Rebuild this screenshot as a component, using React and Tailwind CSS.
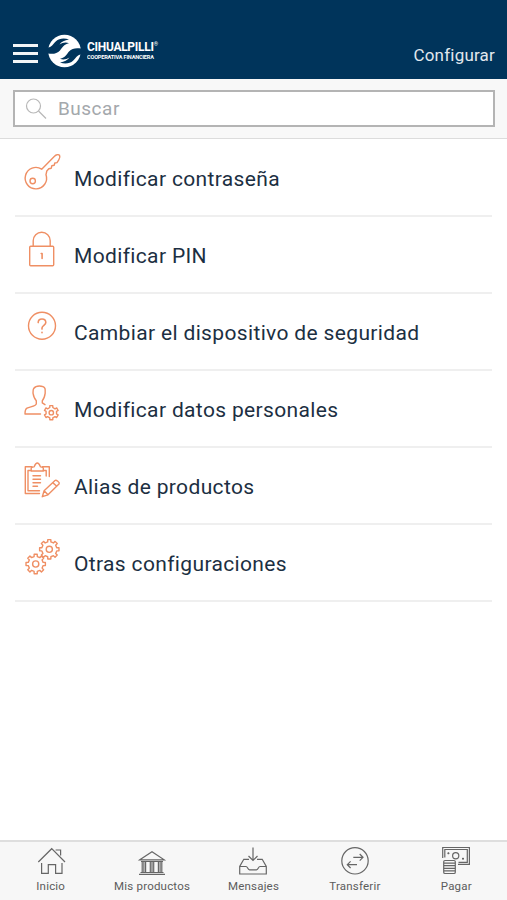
import { useState } from 'react';

const round = (n) => Math.round(n * 100) / 100;

function gearPath(cx, cy, outer, inner, teeth) {
  const step = (Math.PI * 2) / teeth;
  const points = [];
  for (let i = 0; i < teeth; i++) {
    const a = i * step - Math.PI / 2;
    [
      [-0.27, inner],
      [-0.2, outer],
      [0.2, outer],
      [0.27, inner],
    ].forEach(([offset, r]) => {
      points.push(`${round(cx + r * Math.cos(a + offset * step))} ${round(cy + r * Math.sin(a + offset * step))}`);
    });
  }
  return `M${points.join('L')}Z`;
}

function MenuIcon({ children }) {
  return (
    <svg
      className="w-9 h-9 shrink-0 overflow-visible text-[#ef8f64]"
      viewBox="0 0 36 36"
      fill="none"
      stroke="currentColor"
      strokeWidth={1.4}
      strokeLinecap="round"
      strokeLinejoin="round"
    >
      {children}
    </svg>
  );
}

function TabIcon({ children }) {
  return (
    <svg className="w-[30px] h-[30px] text-[#666]" viewBox="0 0 30 30" fill="none" stroke="currentColor" strokeWidth={1.2}>
      {children}
    </svg>
  );
}

const MENU = [
  {
    label: 'Modificar contraseña',
    icon: (
      <>
        <path d="M17.7 15.2 30.5 2.2C32 .8 34.5.2 35.5 1.2 36.2 2.5 36 4 34.8 5.8L33 8.6 30.8 9 30.2 11.3 27.8 11.7 27.3 14.2 24.8 14.8 22.8 17 22 20.7A10.7 10.7 0 1 1 17.7 15.2Z" />
        <circle cx="8.7" cy="27" r="2.7" />
      </>
    ),
  },
  {
    label: 'Modificar PIN',
    icon: (
      <>
        <rect x="5.7" y="15.2" width="24" height="19.6" rx="1" />
        <path d="M9.2 15V9.8a8.5 8.5 0 0 1 17 0V15" />
        <path d="M17.2 22.5h.9v5" strokeWidth={1.6} />
      </>
    ),
  },
  {
    label: 'Cambiar el dispositivo de seguridad',
    icon: (
      <>
        <circle cx="18" cy="17.7" r="13.5" />
        <path d="M14.2 14.6c0-2.2 1.6-3.6 3.8-3.6s3.8 1.4 3.8 3.5c0 2.5-3.8 3-3.8 5.4v1.2M18 24.3v.4" strokeWidth={1.6} />
      </>
    ),
  },
  {
    label: 'Modificar datos personales',
    icon: (
      <>
        <path d="M16.5 29H1c0-2.8.2-5 2-5.9 3-1.5 9.3-1.8 9.3-4.4v-3C10.3 13.8 9.5 11 9 8.2c.2-1.500-.2-3.500.7-4.700C11 1.700 13 1 15.300 1s4.700.6 5.600 2.300c.6 1.700.1 3.300.3 4.900-.4 2.800-1 5.500-2.900 7.500v2.200l2.700 1.800" />
        <path d={gearPath(27.3, 27.7, 7.2, 5.4, 6)} />
        <circle cx="27.3" cy="27.7" r="2.2" />
      </>
    ),
  },
  {
    label: 'Alias de productos',
    icon: (
      <>
        <path d="M8 4.8H1.3v26.7h14.2M7.3 8.5H4v20.2h11.5M18.3 4.8h7v9.7M19.3 8.5h2.9V14" />
        <path d="M7.2 9V6c0-1 2.3-.7 3-1.3.8-2 1.300-3.700 3.100-3.700s2.300 1.700 3.100 3.700c.7.6 2.900.3 2.900 1.300v3Z" />
        <path d="M9 13.7h7.5M9 17.3h7.5M9 20.7h7.5M9 24.2h4.5" />
        <path d="m18.3 34.7 1.8-6 10.9-10.2c1.2-1 4.9 2 4.2 3.300L24 32.800ZM20.100 28.700l3.900 4.100M28.700 20.600l4.100 3.600" />
      </>
    ),
  },
  {
    label: 'Otras configuraciones',
    icon: (
      <>
        <path d={gearPath(25.3, 10.3, 9.8, 7.6, 8)} />
        <circle cx="25.3" cy="10.3" r="3.1" />
        <path d={gearPath(11.7, 25, 9.8, 7.6, 8)} />
        <circle cx="11.7" cy="25" r="3.1" />
      </>
    ),
  },
];

const TABS = [
  {
    label: 'Inicio',
    icon: <path d="M2.3 16 15.700 2.700 29 16M19.600 4h5v5.500M5.600 17v10.300h6.700v-8.600h7.300v8.600H26V17" />,
  },
  {
    label: 'Mis productos',
    icon: (
      <>
        <path d="M2.8 13.8 15 5.7l12.2 8.1ZM4 15.5h22M3.5 26.5h23M2 28.3h26" />
        <path d="M5.2 16v10M6.9 16v10M8.6 16v10M13.3 16v10M15 16v10M16.7 16v10M21.4 16v10M23.1 16v10M24.8 16v10" />
      </>
    ),
  },
  {
    label: 'Mensajes',
    icon: (
      <path d="M15 1.5v13M10.5 10 15 14.5l4.500-4.500M11 13.300H5.800L1.700 20.500v7.500h26.600v-7.500l-4.100-7.200H19M1.700 20.500H8c1.800 0 1.500 3.300 3.500 3.300h7c2 0 1.700-3.300 3.500-3.300h6.300" />
    ),
  },
  {
    label: 'Transferir',
    icon: (
      <>
        <circle cx="15" cy="14.8" r="13.2" />
        <path d="M13.3 11.3H23M19.7 8l3.300 3.300-3.300 3.300M17 18.700H7.300M10.600 15.400l-3.300 3.300 3.300 3.300" />
      </>
    ),
  },
  {
    label: 'Pagar',
    icon: (
      <>
        <path d="M1.7 12V1.5h26.7v16.8H17M3.8 11.5v-8h22.5v12.8H17.5" />
        <circle cx="14.7" cy="9.8" r="3.1" />
        <path d="M7.4 6.3v2M6.4 7.3h2M22 11.7v2M21 12.7h2" />
        <path d="M4 14.5h9q1.3 0 1.3 1.3v10.4q0 1.3-1.3 1.3H4q-1.3 0-1.3-1.3V15.8q0-1.3 1.3-1.3ZM2.7 17.1h11.6M2.7 19.7h11.6M2.7 22.3h11.6M2.7 24.9h11.6" />
      </>
    ),
  },
];

const SWOOSH =
  'M0 14.5C4 14 5 11 8 8.3 11 5.5 16 4.8 21 6.6 16.5 7.3 13.5 8.7 11.5 11.5 14.5 9.5 18 8.8 21 10.3 15.5 11.5 14.5 14.5 12 17.5 9 20.8 5 21.3 0 20.5Z';

function Logo() {
  return (
    <div className="flex items-center gap-[6px] text-white">
      <svg className="w-[33px] h-[36px]" viewBox="0 0 33 36">
        <circle cx="16.5" cy="18" r="16.3" fill="white" />
        <g fill="#00345b">
          <path d={SWOOSH} />
          <path d={SWOOSH} transform="rotate(180 16.5 18)" />
        </g>
      </svg>
      <div className="w-[72px] whitespace-nowrap">
        <div className="flex w-max origin-left scale-x-[0.92] text-[13px] leading-[11px] font-bold tracking-[-0.3px]">
          CIHUALPILLI<span className="text-[6px] leading-[6px]">®</span>
        </div>
        <div className="w-max origin-left scale-x-[0.93] text-[6px] leading-[10px] font-bold tracking-[-0.2px]">
          COOPERATIVA FINANCIERA
        </div>
      </div>
    </div>
  );
}

export default function App() {
  const [query, setQuery] = useState('');

  return (
    <div className="h-screen flex flex-col bg-white font-['Roboto',sans-serif]">
      <header className="h-[79px] shrink-0 flex items-end justify-between bg-[#00345b] pl-[13px] pr-3">
        <div className="flex items-center gap-[10px] pb-[10px]">
          <button type="button" aria-label="Menú" className="w-[25px] mt-[5px] flex flex-col gap-[5px]">
            <span className="h-[3px] bg-[#f2f5f7]" />
            <span className="h-[3px] bg-[#f2f5f7]" />
            <span className="h-[3px] bg-[#f2f5f7]" />
          </button>
          <Logo />
        </div>
        <h1 className="pb-[11px] text-[17px] leading-[26px] tracking-[0.2px] text-[#e0e8ee]">Configurar</h1>
      </header>

      <div className="h-[60px] shrink-0 bg-[#f8f8f8] border-b border-[#dcdcdc] pt-[11px] px-3">
        <label className="h-[37px] ml-px flex items-center bg-white border-2 border-[#b4b4b4] pl-[10px]">
          <svg className="w-[22px] h-[22px] text-[#b8b8b8]" viewBox="0 0 22 22" fill="none" stroke="currentColor" strokeWidth={1.2}>
            <circle cx="8.5" cy="8" r="7" />
            <path d="m13.5 13 7.5 7.5" />
          </svg>
          <input
            className="ml-[11px] mt-[2px] flex-1 outline-none text-[19px] tracking-[0.5px] text-[#666] placeholder:text-[#a4a8ac]"
            placeholder="Buscar"
            value={query}
            onChange={(e) => setQuery(e.target.value)}
          />
        </label>
      </div>

      <main className="flex-1 pt-px px-[15px]">
        {MENU.map(({ label, icon }) => (
          <button
            key={label}
            type="button"
            className="w-full h-[77px] flex items-start gap-[14px] pt-[14px] pl-[9px] border-b-2 border-[#efefef] text-left"
          >
            <MenuIcon>{icon}</MenuIcon>
            <span className="mt-2 text-[21px] leading-[34px] tracking-[0.35px] whitespace-nowrap text-[#1c2f42]">{label}</span>
          </button>
        ))}
      </main>

      <nav className="h-[60px] shrink-0 grid grid-cols-5 bg-[#f7f7f7] border-t-2 border-[#dedede]">
        {TABS.map(({ label, icon }) => (
          <button key={label} type="button" className="flex flex-col items-center pt-1">
            <TabIcon>{icon}</TabIcon>
            <span className="mt-[2px] text-[11.5px] leading-4 tracking-[0.2px] whitespace-nowrap text-[#5c5c5c]">{label}</span>
          </button>
        ))}
      </nav>
    </div>
  );
}
